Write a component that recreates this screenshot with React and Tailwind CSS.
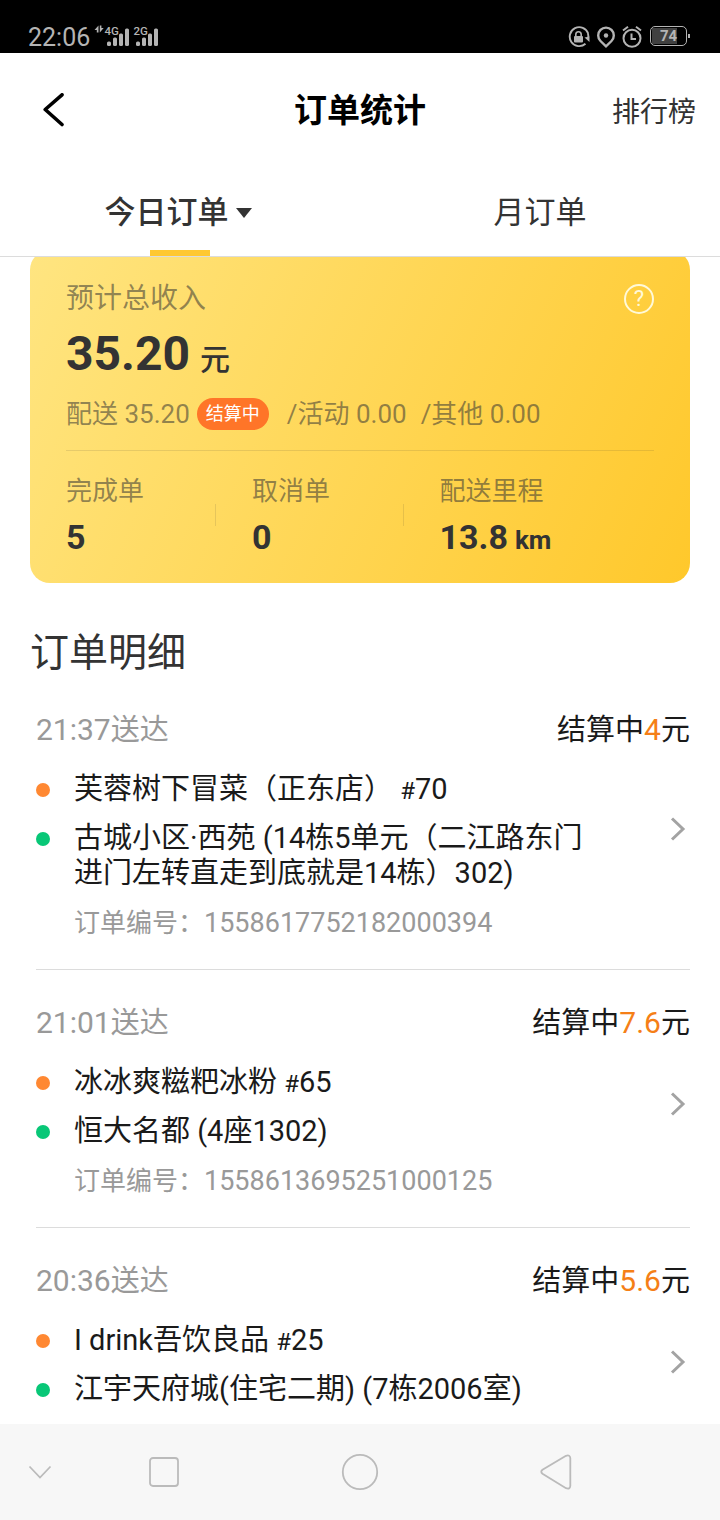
const orders = [
  {
    id: '1558617752182000394',
    time: '21:37',
    fee: '4',
    shop: '芙蓉树下冒菜（正东店）',
    no: '70',
    address: '古城小区·西苑 (14栋5单元（二江路东门进门左转直走到底就是14栋）302)',
  },
  {
    id: '1558613695251000125',
    time: '21:01',
    fee: '7.6',
    shop: '冰冰爽糍粑冰粉',
    no: '65',
    address: '恒大名都 (4座1302)',
  },
  {
    time: '20:36',
    fee: '5.6',
    shop: 'I drink吾饮良品',
    no: '25',
    address: '江宇天府城(住宅二期) (7栋2006室)',
  },
];

function Signal({ label, arrows }) {
  return (
    <svg width={arrows ? 35 : 25} height="22" viewBox={arrows ? '0 0 35 22' : '10 0 25 22'} fill="#b4b4b4" overflow="visible">
      {arrows && <path d="M3.500 .5v7H1.800V5H-.5L3.500 .5ZM4.800 .5h1.600v2.500H8.700L4.800 7.500Z" />}
      <text x="9.500" y="10" fontSize="11.500" fontWeight="500" fontFamily="Roboto, sans-serif">{label}</text>
      <rect x="12" y="16.500" width="4" height="4.500" rx="1.500" />
      <rect x="18" y="12.500" width="4" height="8.500" rx="1.500" />
      <rect x="24" y="8.500" width="4" height="12.500" rx="1.500" />
      <rect x="30" y="3.500" width="4" height="17.500" rx="1.500" />
    </svg>
  );
}

function StatusBar() {
  return (
    <div className="flex h-[53px] shrink-0 items-end justify-between bg-black pb-[3px] pl-7 pr-[30px] text-[#b4b4b4]">
      <div className="flex items-end">
        <span className="text-[25px] leading-6">22:06</span>
        <span className="ml-[5px] flex gap-1 pb-[3px]">
          <Signal label="4G" arrows />
          <Signal label="2G" />
        </span>
      </div>
      <div className="flex items-center gap-[7px] pb-px">
        <svg width="22" height="24" viewBox="0 0 22 24" fill="none" stroke="#b4b4b4" strokeWidth="1.900">
          <path d="M20.200 8.500A9.500 9.500 0 1 0 17.500 18.800M19.900 8.500a9.500 9.500 0 0 1 .4 3.500" />
          <path d="m16.500 12.500 5 4.500v-5.500z" fill="#b4b4b4" stroke="none" />
          <rect x="6" y="11" width="9" height="6.500" rx="1" fill="#b4b4b4" stroke="none" />
          <path d="M7.800 11.500V9.500a2.700 2.700 0 0 1 5.400 0v2" strokeWidth="1.600" />
        </svg>
        <svg width="18" height="24" viewBox="0 0 18 24" fill="none" stroke="#b4b4b4" strokeWidth="2.400">
          <path d="M9 21.300 3.500 16a7.800 7.800 0 1 1 11 0L9 21.300Z" />
          <circle cx="9" cy="10.500" r="2.200" fill="#b4b4b4" stroke="none" />
        </svg>
        <svg width="20" height="24" viewBox="0 0 20 24" fill="none" stroke="#b4b4b4" strokeWidth="2">
          <circle cx="10" cy="13.300" r="8.500" />
          <path d="M9.500 8.500V14H14M1 5.500l5-3.800M19 5.500l-5-3.800" />
        </svg>
        <div className="ml-px flex items-center pb-0.5">
          <span className="flex h-5 w-[37px] items-center rounded-[5px] border border-[#b4b4b4] p-px">
            <span className="flex h-4 w-full items-center justify-center bg-linear-to-r from-[#404040] from-75% to-black to-75% text-[15px] font-bold">74</span>
          </span>
          <span className="ml-px h-1 w-0.5 bg-[#b4b4b4]" />
        </div>
      </div>
    </div>
  );
}

function Header() {
  return (
    <header className="grid h-[115px] shrink-0 grid-cols-3 items-center pl-[42px] pr-6">
      <button type="button" aria-label="返回" className="w-6">
        <svg width="24" height="36" viewBox="0 0 24 36" fill="none" stroke="#000" strokeWidth="3.600" strokeLinecap="round" strokeLinejoin="round">
          <path d="M20 1.800 3.200 16.500 20 31.500" />
        </svg>
      </button>
      <h1 className="-ml-[18px] text-center text-[33px] font-bold text-black">订单统计</h1>
      <a href="#rank" className="justify-self-end pt-1 text-[28px] text-[#333]">排行榜</a>
    </header>
  );
}

function Tabs() {
  return (
    <div role="tablist" className="grid h-[89px] shrink-0 grid-cols-2 border-b border-[#dcdcdc] text-[31px] text-[#333]">
      <button type="button" role="tab" aria-selected="true" className="flex flex-col items-center justify-between pt-[23px] font-medium">
        <span className="flex items-center gap-[7px] pr-1 leading-[44px]">
          今日订单
          <svg width="16" height="10" viewBox="0 0 16 10" fill="#333"><path d="M0 0h16L8 10Z" /></svg>
        </span>
        <span className="h-1.5 w-[60px] bg-[#ffc832]" />
      </button>
      <button type="button" role="tab" aria-selected="false" className="flex justify-center pt-[23px] leading-[44px]">
        月订单
      </button>
    </div>
  );
}

function Stat({ label, value, unit }) {
  return (
    <div>
      <dt className="text-[26px] leading-9 text-[#333]/55">{label}</dt>
      <dd className="mt-2 text-[34px] font-bold leading-10 text-[#333]">
        {value}
        {unit && <span className="ml-[7px] text-[26px] leading-none">{unit}</span>}
      </dd>
    </div>
  );
}

function Summary() {
  return (
    <section className="mx-[30px] -mt-2 rounded-[20px] bg-[linear-gradient(115deg,#ffe581,#ffc82b)] px-9 pb-[26px] pt-[31px] text-[#333]">
      <div className="flex items-center justify-between">
        <h2 className="text-[28px] leading-9 text-[#333]/55">预计总收入</h2>
        <button type="button" aria-label="说明" className="flex size-[30px] items-center justify-center rounded-full border-2 border-[#fff9d8] text-[22px] leading-none text-[#fff9d8]">
          ?
        </button>
      </div>
      <p className="mt-[7px] text-5xl font-bold leading-[60px]">
        35.20<span className="ml-2.5 text-[30px] font-medium leading-none">元</span>
      </p>
      <p className="mt-3 flex items-center text-[26px] leading-9 text-[#333]/55">
        配送 35.20
        <span className="ml-[7px] mr-[18px] flex h-8 items-center rounded-full bg-[#ff7528] px-[9px] text-lg text-white">结算中</span>
        /活动 0.00
        <span className="ml-[14px]">/其他 0.00</span>
      </p>
      <hr className="mt-[18px] border-[#333]/12" />
      <dl className="mt-[22px] grid grid-cols-[149px_1fr_1fr] items-center">
        <Stat label="完成单" value="5" />
        <div className="flex items-center gap-9">
          <span className="h-[22px] w-px bg-[#333]/12" />
          <Stat label="取消单" value="0" />
        </div>
        <div className="-ml-8 flex items-center gap-9">
          <span className="h-[22px] w-px bg-[#333]/12" />
          <Stat label="配送里程" value="13.8" unit="km" />
        </div>
      </dl>
    </section>
  );
}

function Order({ order }) {
  return (
    <li className="ml-9 mr-[30px] border-b border-[#dcdcdc] pb-7 pt-9 text-[29px] leading-[35px] text-[#1a1a1a] last:border-b-0">
      <div className="flex justify-between">
        <span className="text-[#999]"><span className="text-[30px] leading-none">{order.time}</span>送达</span>
        <span>结算中<span className="text-[30px] leading-none text-[#f57f17]">{order.fee}</span>元</span>
      </div>
      <div className="mt-6 flex items-center">
        <div className="flex flex-1 flex-col gap-[14px] pr-[68px]">
          <p className="flex">
            <span className="mr-6 mt-[11px] size-[14px] shrink-0 rounded-full bg-[#ff8832]" />
            <span>{order.shop} <span className="text-2xl leading-none">#</span>{order.no}</span>
          </p>
          <p className="flex">
            <span className="mr-6 mt-[11px] size-[14px] shrink-0 rounded-full bg-[#08c777]" />
            <span>{order.address}</span>
          </p>
        </div>
        <a href="#order" aria-label="查看订单" className="pb-1.5 pr-1">
          <svg width="16" height="24" viewBox="0 0 16 24" fill="none" stroke="#a3a3a3" strokeWidth="3">
            <path d="m2 1.500 11 10.500-11 10.500" />
          </svg>
        </a>
      </div>
      {order.id && (
        <p className="mt-[15px] pl-[38px] text-[26px] text-[#999]">
          订单编号：<span className="text-[27px] leading-none">{order.id}</span>
        </p>
      )}
    </li>
  );
}

function NavBar() {
  return (
    <nav className="flex h-24 shrink-0 bg-[#f7f7f7] pr-[66px]">
      <button type="button" aria-label="收起" className="flex w-[66px] items-center justify-center pl-[14px]">
        <svg width="24" height="16" viewBox="0 0 24 16" fill="none" stroke="#bbb" strokeWidth="1.800"><path d="m1.500 2.500 10.500 11 10.500-11" /></svg>
      </button>
      <button type="button" aria-label="最近任务" className="flex flex-1 items-center justify-center">
        <svg width="32" height="32" viewBox="0 0 32 32" fill="none" stroke="#bbb" strokeWidth="1.800"><rect x="2" y="2" width="28" height="28" rx="3" /></svg>
      </button>
      <button type="button" aria-label="主屏幕" className="flex flex-1 items-center justify-center">
        <svg width="38" height="38" viewBox="0 0 38 38" fill="none" stroke="#bbb" strokeWidth="1.800"><circle cx="19" cy="19" r="17.200" /></svg>
      </button>
      <button type="button" aria-label="返回上一页" className="flex flex-1 items-center justify-center">
        <svg width="32" height="36" viewBox="0 0 32 36" fill="none" stroke="#bbb" strokeWidth="1.800"><path d="M26 1.800 2.500 15.800q-2.500 2 0 4L26 34.200q4 1.500 4.300-2.200V4Q30 .5 26 1.800Z" /></svg>
      </button>
    </nav>
  );
}

export default function App() {
  return (
    <div className="flex h-screen flex-col bg-white font-[Roboto,'Noto_Sans_CJK_SC',sans-serif]" lang="zh-CN">
      <StatusBar />
      <Header />
      <Tabs />
      <main className="min-h-0 flex-1 overflow-y-auto pt-px [scrollbar-width:none]">
        <Summary />
        <h2 className="ml-[30px] mt-[47px] text-[39px] leading-[47px] text-[#333]">订单明细</h2>
        <ul>
          {orders.map((order) => <Order key={order.time} order={order} />)}
        </ul>
      </main>
      <NavBar />
    </div>
  );
}
